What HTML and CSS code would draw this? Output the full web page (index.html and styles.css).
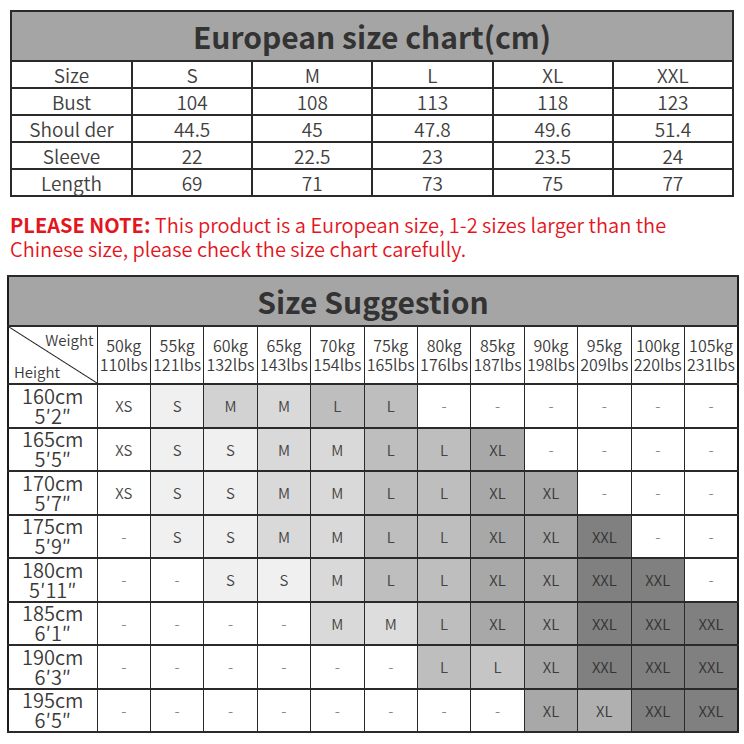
FILE: index.html
```html
<!DOCTYPE html>
<html>
<head>
<meta charset="utf-8">
<link rel="stylesheet" href="styles.css">
</head>
<body>
<div class="page">
  <table class="eu">
    <colgroup><col class="eu-first"><col><col><col><col><col></colgroup>
    <tr><td class="title" colspan="6">European size chart(cm)</td></tr>
    <tr><td>Size</td><td>S</td><td>M</td><td>L</td><td>XL</td><td>XXL</td></tr>
    <tr><td>Bust</td><td>104</td><td>108</td><td>113</td><td>118</td><td>123</td></tr>
    <tr><td>Shoul der</td><td>44.5</td><td>45</td><td>47.8</td><td>49.6</td><td>51.4</td></tr>
    <tr><td>Sleeve</td><td>22</td><td>22.5</td><td>23</td><td>23.5</td><td>24</td></tr>
    <tr><td>Length</td><td>69</td><td>71</td><td>73</td><td>75</td><td>77</td></tr>
  </table>

  <p class="note"><b>PLEASE NOTE:</b> This product is a European size, 1-2 sizes larger than the Chinese size, please check the size chart carefully.</p>

  <table class="sug">
    <colgroup><col class="sug-first"><col><col><col><col><col><col><col><col><col><col><col><col></colgroup>
    <tr><td class="title" colspan="13">Size Suggestion</td></tr>
    <tr class="wrow">
      <td class="diag"><span class="w">Weight</span><span class="h">Height</span></td>
      <td>50kg<br>110lbs</td><td>55kg<br>121lbs</td><td>60kg<br>132lbs</td><td>65kg<br>143lbs</td>
      <td>70kg<br>154lbs</td><td>75kg<br>165lbs</td><td>80kg<br>176lbs</td><td>85kg<br>187lbs</td>
      <td>90kg<br>198lbs</td><td>95kg<br>209lbs</td><td>100kg<br>220lbs</td><td>105kg<br>231lbs</td>
    </tr>
    <tr>
      <td class="ht">160cm<br>5′2″</td>
      <td class="xs">XS</td><td class="s">S</td><td class="m m-dk">M</td><td class="m">M</td><td class="l">L</td><td class="l">L</td>
      <td class="no">-</td><td class="no">-</td><td class="no">-</td><td class="no">-</td><td class="no">-</td><td class="no">-</td>
    </tr>
    <tr>
      <td class="ht">165cm<br>5′5″</td>
      <td class="xs">XS</td><td class="s">S</td><td class="s">S</td><td class="m">M</td><td class="m">M</td><td class="l">L</td>
      <td class="l">L</td><td class="xl">XL</td><td class="no">-</td><td class="no">-</td><td class="no">-</td><td class="no">-</td>
    </tr>
    <tr>
      <td class="ht">170cm<br>5′7″</td>
      <td class="xs">XS</td><td class="s">S</td><td class="s">S</td><td class="m">M</td><td class="m">M</td><td class="l">L</td>
      <td class="l">L</td><td class="xl">XL</td><td class="xl">XL</td><td class="no">-</td><td class="no">-</td><td class="no">-</td>
    </tr>
    <tr>
      <td class="ht">175cm<br>5′9″</td>
      <td class="no">-</td><td class="s">S</td><td class="s">S</td><td class="m">M</td><td class="m">M</td><td class="l">L</td>
      <td class="l">L</td><td class="xl">XL</td><td class="xl">XL</td><td class="xxl">XXL</td><td class="no">-</td><td class="no">-</td>
    </tr>
    <tr>
      <td class="ht">180cm<br>5′11″</td>
      <td class="no">-</td><td class="no">-</td><td class="s">S</td><td class="s">S</td><td class="m">M</td><td class="l">L</td>
      <td class="l">L</td><td class="xl">XL</td><td class="xl">XL</td><td class="xxl">XXL</td><td class="xxl">XXL</td><td class="no">-</td>
    </tr>
    <tr>
      <td class="ht">185cm<br>6′1″</td>
      <td class="no">-</td><td class="no">-</td><td class="no">-</td><td class="no">-</td><td class="m">M</td><td class="m m-lt">M</td>
      <td class="l">L</td><td class="xl">XL</td><td class="xl">XL</td><td class="xxl">XXL</td><td class="xxl">XXL</td><td class="xxl">XXL</td>
    </tr>
    <tr>
      <td class="ht">190cm<br>6′3″</td>
      <td class="no">-</td><td class="no">-</td><td class="no">-</td><td class="no">-</td><td class="no">-</td><td class="no">-</td>
      <td class="l">L</td><td class="l l-lt">L</td><td class="xl">XL</td><td class="xxl">XXL</td><td class="xxl">XXL</td><td class="xxl">XXL</td>
    </tr>
    <tr>
      <td class="ht">195cm<br>6′5″</td>
      <td class="no">-</td><td class="no">-</td><td class="no">-</td><td class="no">-</td><td class="no">-</td><td class="no">-</td>
      <td class="no">-</td><td class="no">-</td><td class="xl">XL</td><td class="xl xl-lt">XL</td><td class="xxl">XXL</td><td class="xxl">XXL</td>
    </tr>
  </table>
</div>
</body>
</html>
```

FILE: styles.css
```css
body {
  margin: 0;
  background: #ffffff;
  font-family: "Noto Sans CJK SC", "Noto Sans", sans-serif;
}

.page {
  padding: 10px;
}

.eu {
  width: 724px;
  border-collapse: collapse;
  table-layout: fixed;
  border: 2px solid #1a1a1a;
}

.eu-first {
  width: 121px;
}

.eu td {
  border: 2px solid #2a2a2a;
  text-align: center;
  padding: 0;
  height: 25px;
  line-height: 25px;
  font-size: 19px;
  font-weight: 350;
  color: #404040;
}

.eu td.title,
.sug td.title {
  background: #a5a5a5;
  color: #333333;
  font-weight: bold;
  font-size: 30px;
  height: 48px;
  line-height: 46px;
}

.note {
  width: 680px;
  margin: 16px 0 0;
  font-size: 20px;
  font-weight: 350;
  line-height: 24px;
  color: #e3151d;
}

.note b {
  font-weight: bold;
}

.sug {
  width: 732px;
  margin: 14px 0 0 -3px;
  border-collapse: collapse;
  table-layout: fixed;
  border: 2px solid #1a1a1a;
}

.sug-first {
  width: 89px;
}

.sug td {
  border: 1px solid #2a2a2a;
  border-top-width: 2px;
  border-bottom-width: 2px;
  text-align: center;
  padding: 0;
  color: #444444;
  font-size: 15px;
  font-weight: 350;
  height: 41.5px;
}

.sug .wrow td {
  height: 56px;
  font-size: 16px;
  line-height: 19px;
  color: #3a3a3a;
}

.sug td.diag {
  position: relative;
  text-align: left;
  background: linear-gradient(to top right, transparent calc(50% - 1px), #222 50%, transparent calc(50% + 1px));
  font-size: 15px;
}

.diag .w {
  position: absolute;
  top: 3px;
  right: 3px;
}

.diag .h {
  position: absolute;
  bottom: 2px;
  left: 5px;
}

.sug td.ht {
  font-size: 20px;
  line-height: 20px;
  color: #3a3a3a;
}

.sug td.no { color: #888888; }
.sug td.xs { background: #ffffff; }
.sug td.s { background: #f0f0f0; }
.sug td.m { background: #d9d9d9; }
.sug td.m-dk { background: #d2d2d2; }
.sug td.m-lt { background: #dddddd; }
.sug td.l { background: #bebebe; }
.sug td.l-lt { background: #c5c5c5; }
.sug td.xl { background: #a8a8a8; color: #3a3a3a; }
.sug td.xl-lt { background: #b0b0b0; }
.sug td.xxl { background: #808080; color: #333333; }
```
